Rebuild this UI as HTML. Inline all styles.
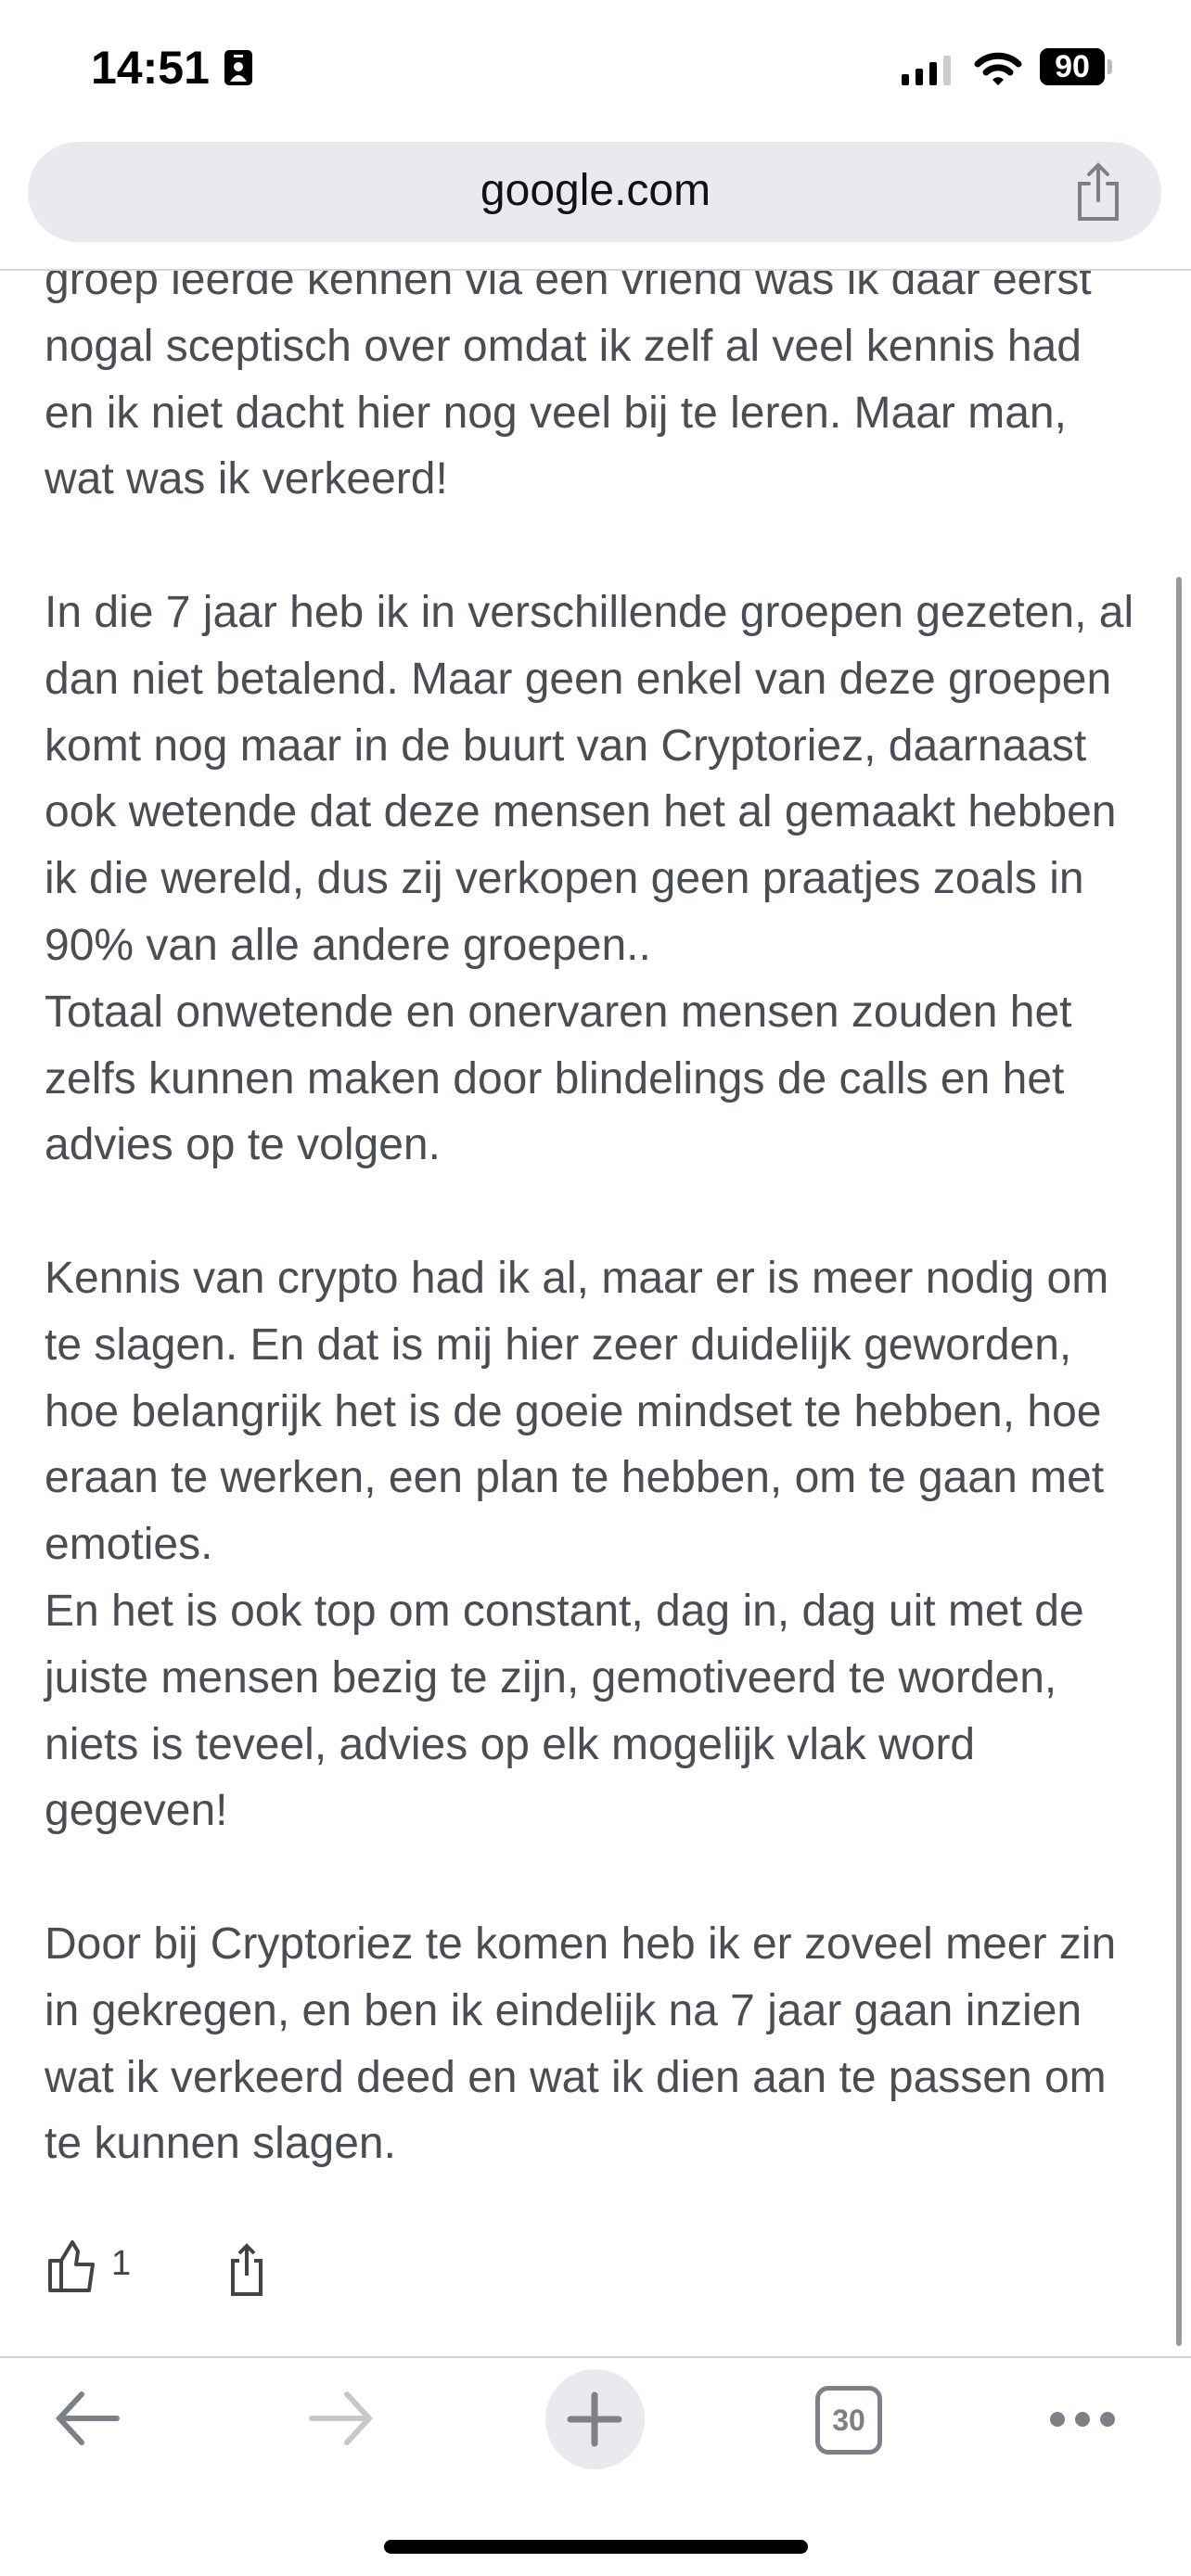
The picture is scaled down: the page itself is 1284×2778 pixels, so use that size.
<!DOCTYPE html>
<html><head><meta charset="utf-8"><style>
body{margin:0;width:1284px;height:2778px;position:relative;background:#fff;overflow:hidden;font-family:"Liberation Sans",sans-serif}
.abs{position:absolute}
#text{position:absolute;left:48px;top:266px;color:#4a4d53;font-size:48px;line-height:71.8px}
#text div{white-space:nowrap;height:71.8px}
#hdr{position:absolute;left:0;top:0;width:1284px;height:290px;background:#fff;border-bottom:2px solid #d8d8d8}
</style></head><body>
<div id="text">
<div>groep leerde kennen via een vriend was ik daar eerst</div>
<div>nogal sceptisch over omdat ik zelf al veel kennis had</div>
<div>en ik niet dacht hier nog veel bij te leren. Maar man,</div>
<div>wat was ik verkeerd!</div>
<div></div>
<div>In die 7 jaar heb ik in verschillende groepen gezeten, al</div>
<div>dan niet betalend. Maar geen enkel van deze groepen</div>
<div>komt nog maar in de buurt van Cryptoriez, daarnaast</div>
<div>ook wetende dat deze mensen het al gemaakt hebben</div>
<div>ik die wereld, dus zij verkopen geen praatjes zoals in</div>
<div>90% van alle andere groepen..</div>
<div>Totaal onwetende en onervaren mensen zouden het</div>
<div>zelfs kunnen maken door blindelings de calls en het</div>
<div>advies op te volgen.</div>
<div></div>
<div>Kennis van crypto had ik al, maar er is meer nodig om</div>
<div>te slagen. En dat is mij hier zeer duidelijk geworden,</div>
<div>hoe belangrijk het is de goeie mindset te hebben, hoe</div>
<div>eraan te werken, een plan te hebben, om te gaan met</div>
<div>emoties.</div>
<div>En het is ook top om constant, dag in, dag uit met de</div>
<div>juiste mensen bezig te zijn, gemotiveerd te worden,</div>
<div>niets is teveel, advies op elk mogelijk vlak word</div>
<div>gegeven!</div>
<div></div>
<div>Door bij Cryptoriez te komen heb ik er zoveel meer zin</div>
<div>in gekregen, en ben ik eindelijk na 7 jaar gaan inzien</div>
<div>wat ik verkeerd deed en wat ik dien aan te passen om</div>
<div>te kunnen slagen.</div>
</div>
<div id="hdr"></div>
<div class="abs" style="left:98px;top:44px;font-size:50px;font-weight:bold;color:#000">14:51</div>
<svg class="abs" style="left:240px;top:52px" width="34" height="42"><rect x="2" y="2" width="30" height="38" rx="5" fill="#000"/><rect x="12" y="7" width="10" height="3" fill="#fff"/><circle cx="17" cy="20" r="5" fill="#fff"/><path d="M8 36q9-14 18 0z" fill="#fff"/></svg>
<svg class="abs" style="left:972px;top:60px" width="60" height="32"><rect x="0" y="20" width="8" height="12" rx="2"/><rect x="15" y="14" width="8" height="18" rx="2"/><rect x="30" y="7" width="8" height="25" rx="2"/><rect x="45" y="0" width="8" height="32" rx="2" fill="#ccc"/></svg>
<svg class="abs" style="left:1050px;top:55px" width="52" height="38"><path d="M4 14a32 32 0 0 1 44 0" stroke="#000" stroke-width="7" fill="none" stroke-linecap="round"/><path d="M13 23a19 19 0 0 1 26 0" stroke="#000" stroke-width="7" fill="none" stroke-linecap="round"/><path d="M20 31l6 6 6-6a8 8 0 0 0-12 0z" fill="#000"/></svg>
<div class="abs" style="left:1121px;top:52px;width:70px;height:40px;background:#000;border-radius:9px;color:#fff;font-weight:bold;font-size:34px;text-align:center;line-height:40px">90</div>
<div class="abs" style="left:1194px;top:64px;width:5px;height:16px;background:#bbb;border-radius:0 3px 3px 0"></div>
<div class="abs" style="left:30px;top:153px;width:1222px;height:108px;background:#e9eaee;border-radius:54px"></div>
<div class="abs" style="left:0;top:178px;width:1284px;text-align:center;font-size:48px;color:#111">google.com</div>
<svg class="abs" style="left:1156px;top:172px" width="56" height="68" fill="none" stroke="#7d8187" stroke-width="4" stroke-linecap="round"><path d="M18 26H8v38h40V26H38"/><path d="M28 44V6M18 16l10-10 10 10"/></svg>
<div class="abs" style="right:10px;top:622px;width:6px;height:1908px;background:#999;border-radius:3px"></div>
<svg class="abs" style="left:52px;top:2416px" width="56" height="56" fill="none" stroke="#444" stroke-width="4" stroke-linejoin="round"><path d="M2 22h12v32H2zM14 54h30l4-28H30l2-14-6-10-12 20"/></svg>
<div class="abs" style="left:120px;top:2420px;font-size:38px;color:#444">1</div>
<svg class="abs" style="left:246px;top:2418px" width="40" height="60" fill="none" stroke="#444" stroke-width="4"><path d="M12 20H5v36h30V20h-7"/><path d="M20 36V4M12 12l8-8 8 8"/></svg>
<div class="abs" style="left:0;top:2541px;width:1284px;height:2px;background:#d4d4d4"></div>
<svg class="abs" style="left:58px;top:2578px" width="74" height="60" fill="none" stroke="#7d8187" stroke-width="6" stroke-linecap="round"><path d="M68 30H6M30 4L6 30l24 26"/></svg>
<svg class="abs" style="left:330px;top:2578px" width="74" height="60" fill="none" stroke="#c8c8c8" stroke-width="6" stroke-linecap="round"><path d="M6 30h62M44 4l24 26-24 26"/></svg>
<div class="abs" style="left:588px;top:2555px;width:107px;height:108px;border-radius:50%;background:#e9eaee"></div>
<svg class="abs" style="left:611px;top:2579px" width="60" height="60" stroke="#7d8187" stroke-width="7" stroke-linecap="round"><path d="M30 4v52M4 30h52"/></svg>
<div class="abs" style="left:879px;top:2573px;width:62px;height:64px;border:5px solid #7d8187;border-radius:14px;color:#7d8187;font-size:32px;font-weight:bold;text-align:center;line-height:64px">30</div>
<svg class="abs" style="left:1130px;top:2596px" width="74" height="26" fill="#7d8187"><circle cx="10" cy="13" r="8"/><circle cx="37" cy="13" r="8"/><circle cx="64" cy="13" r="8"/></svg>
<div class="abs" style="left:414px;top:2739px;width:457px;height:15px;background:#000;border-radius:8px"></div>
</body></html>
